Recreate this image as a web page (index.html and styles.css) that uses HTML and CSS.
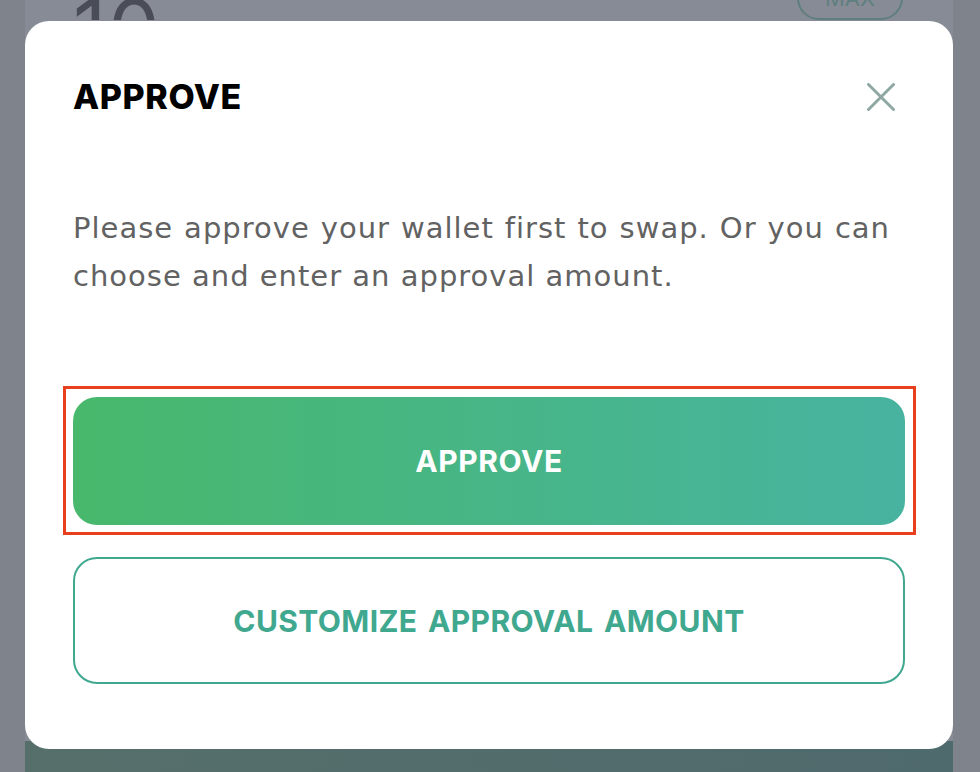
FILE: index.html
```html
<!DOCTYPE html>
<html lang="en">
<head>
<meta charset="utf-8">
<title>Approve</title>
<link rel="stylesheet" href="styles.css">
</head>
<body>
<div class="page">
  <div class="page-card">
    <div class="amount-row">
      <span class="amount">10</span>
      <span class="max-pill">MAX</span>
    </div>
    <div class="spacer"></div>
    <div class="swap-btn"></div>
  </div>
</div>

<div class="modal" role="dialog">
  <div class="modal-header">
    <h2 class="modal-title">APPROVE</h2>
    <button class="close-btn" aria-label="Close">
      <svg width="28" height="28" viewBox="0 0 28 28"><path d="M1.5 1.5 L26.5 26.5 M26.5 1.5 L1.5 26.5" stroke="#8fa8a3" stroke-width="3" stroke-linecap="round" fill="none"/></svg>
    </button>
  </div>
  <p class="modal-text">Please approve your wallet first to swap. Or you can choose and enter an approval amount.</p>
  <div class="actions">
    <div class="highlight">
      <button class="btn btn-primary">APPROVE</button>
    </div>
    <button class="btn btn-outline">CUSTOMIZE APPROVAL AMOUNT</button>
  </div>
</div>
</body>
</html>
```
FILE: styles.css
```css
html, body {
  margin: 0;
  padding: 0;
  height: 100%;
  overflow: hidden;
}
body {
  background: #7f838c;
  font-family: "Inter", "Noto Sans", sans-serif;
}
.page {
  padding: 0 27px 0 25px;
  height: 100%;
  box-sizing: border-box;
}
.page-card {
  background: #878b95;
  height: 800px;
  border-radius: 0 0 24px 24px;
  display: flex;
  flex-direction: column;
}
.amount-row {
  display: flex;
  justify-content: space-between;
  align-items: flex-end;
  height: 20px;
  overflow: hidden;
  padding: 0 50px 0 48px;
}
.amount {
  align-self: flex-start;
  font-family: "Inter", sans-serif;
  font-size: 82px;
  line-height: 1;
  margin-top: -11px;
  color: #4a4d58;
  font-weight: 400;
  letter-spacing: 2px;
}
.max-pill {
  border: 2px solid #5f7f7e;
  border-radius: 22px;
  width: 106px;
  height: 44px;
  box-sizing: border-box;
  color: #5f7f7e;
  font-size: 22px;
  display: flex;
  align-items: center;
  justify-content: center;
  flex: none;
}
.spacer { height: 729px; }
.swap-btn {
  height: 60px;
  border-radius: 0 0 28px 28px;
  background: linear-gradient(90deg, #566f6b, #4f6a6d);
}

.modal {
  position: fixed;
  top: 21px;
  left: 25px;
  width: 928px;
  height: 728px;
  background: #fff;
  border-radius: 24px;
  box-sizing: border-box;
  padding: 56px 48px 0 48px;
  display: flex;
  flex-direction: column;
}
.modal-header {
  display: flex;
  justify-content: space-between;
  align-items: center;
  height: 40px;
}
.modal-title {
  margin: 0;
  font-family: "Inter", sans-serif;
  font-weight: 800;
  font-size: 34px;
  line-height: 40px;
  color: #000;
  letter-spacing: 0.6px;
}
.close-btn {
  background: none;
  border: 0;
  padding: 0;
  margin-right: 10px;
  width: 28px;
  height: 28px;
  display: flex;
}
.modal-text {
  margin: 87px 15px 0 0;
  font-family: "DejaVu Sans", sans-serif;
  font-size: 29px;
  line-height: 48px;
  color: #626262;
  text-align: justify;
  letter-spacing: 1px;
}
.actions {
  margin-top: 86px;
  display: flex;
  flex-direction: column;
}
.highlight {
  margin: 0 -11px 22px -10px;
  padding: 8px 8px 7px 7px;
  border: 3px solid #e8401c;
  display: flex;
  flex-direction: column;
}
.btn {
  height: 128px;
  border-radius: 24px;
  font-family: "Inter", sans-serif;
  font-weight: 700;
  font-size: 30px;
  letter-spacing: 0.6px;
  word-spacing: 3px;
  cursor: pointer;
}
.btn-primary {
  border: 0;
  color: #fff;
  background: linear-gradient(90deg, #48b86c, #47b3a0);
}
.btn-outline {
  height: 127px;
  background: #fff;
  border: 2px solid #3fa88f;
  color: #3fa88f;
  letter-spacing: 0.4px;
}
```
